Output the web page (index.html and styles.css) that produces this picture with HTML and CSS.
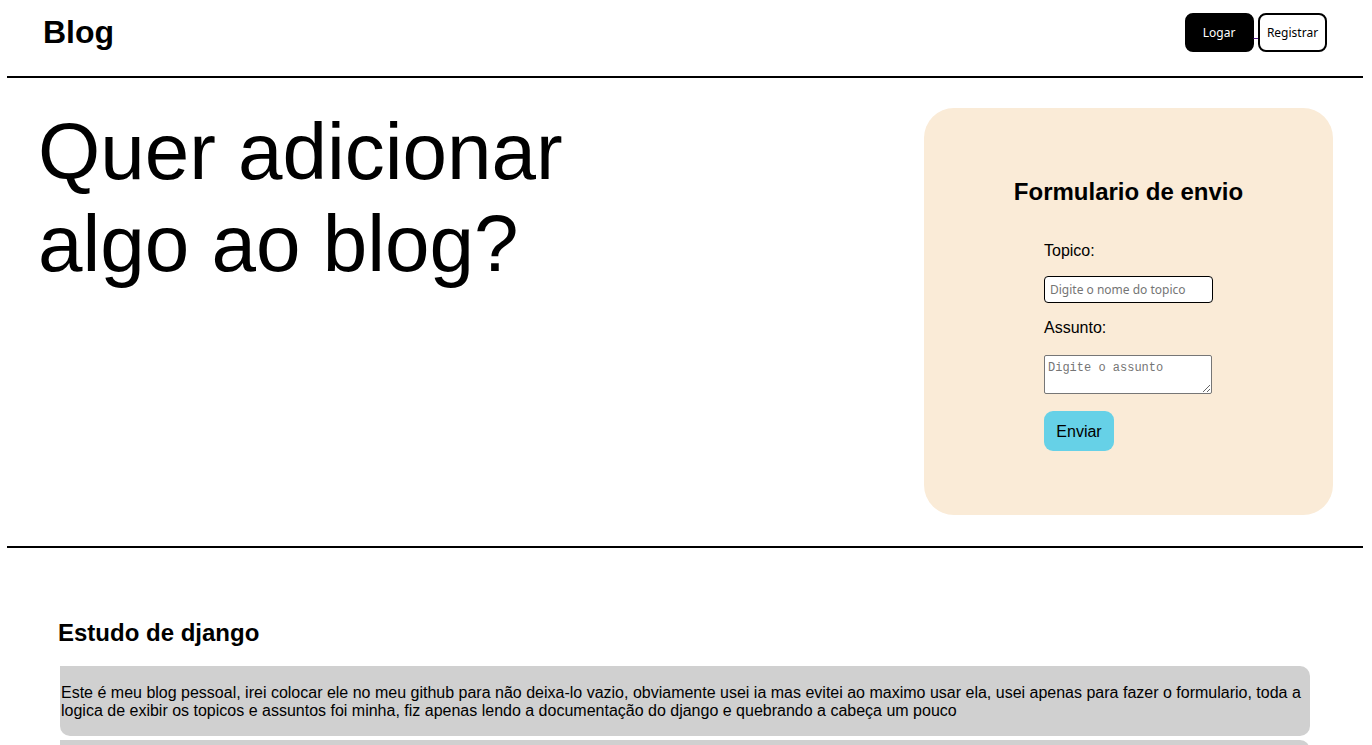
FILE: index.html
```html
<!DOCTYPE html>
<html lang="pt-BR">
<head>
<meta charset="utf-8">
<title>Blog</title>
<link rel="stylesheet" href="styles.css">
</head>
<body>
<header class="topbar">
  <h1 class="brand">Blog</h1>
  <nav class="auth"><a href="#" class="auth-link"><button class="btn btn-dark">Logar</button> </a><a href="#" class="auth-link"><button class="btn btn-light">Registrar</button></a></nav>
</header>
<div class="rule"></div>
<main class="hero">
  <h1 class="hero-title">Quer adicionar<br>algo ao blog?</h1>
  <section class="form-card">
    <h2 class="form-title">Formulario de envio</h2>
    <form class="form-fields">
      <label class="field-label" for="topico">Topico:</label>
      <input class="field-input" id="topico" type="text" placeholder="Digite o nome do topico">
      <label class="field-label" for="assunto">Assunto:</label>
      <textarea class="field-area" id="assunto" placeholder="Digite o assunto"></textarea>
      <button type="button" class="btn-send">Enviar</button>
    </form>
  </section>
</main>
<div class="rule rule-lower"></div>
<section class="posts">
  <h2 class="post-topic">Estudo de django</h2>
  <div class="post-list">
    <div class="post"><p class="post-text">Este é meu blog pessoal, irei colocar ele no meu github para não deixa-lo vazio, obviamente usei ia mas evitei ao maximo usar ela, usei apenas para fazer o formulario, toda a logica de exibir os topicos e assuntos foi minha, fiz apenas lendo a documentação do django e quebrando a cabeça um pouco</p></div>
    <div class="post post-empty"></div>
  </div>
</section>
</body>
</html>
```
FILE: styles.css
```css
* { box-sizing: border-box; }
html, body { margin: 0; padding: 0; }
body {
  font-family: "Liberation Sans", Arial, sans-serif;
  color: #000;
  background: #fff;
}
.topbar {
  display: flex;
  justify-content: space-between;
  align-items: center;
  height: 65px;
  padding: 0 45px 0 43px;
}
.brand {
  margin: 0;
  font-size: 32px;
  font-weight: bold;
}
.auth { font-size: 16px; }
.auth-link { color: #551a8b; text-decoration: underline; }
.btn {
  width: 69px;
  height: 39px;
  border-radius: 8px;
  font-family: "Noto Sans", sans-serif;
  font-size: 12px;
  padding: 0;
  vertical-align: middle;
  cursor: pointer;
}
.btn-dark { background: #000; color: #fff; border: 2px solid #000; }
.btn-light { background: #fff; color: #000; border: 2px solid #000; }
.rule {
  height: 2px;
  background: #000;
  margin: 11px 9px 0 7px;
}
.hero {
  display: flex;
  justify-content: space-between;
  align-items: flex-start;
  padding: 30px 39px 0 38px;
}
.hero-title {
  margin: -2px 0 0;
  font-size: 80px;
  font-weight: normal;
  line-height: normal;
}
.form-card {
  width: 409px;
  height: 407px;
  background: #faebd7;
  border-radius: 30px;
  padding-top: 70px;
  display: flex;
  flex-direction: column;
  align-items: center;
}
.form-title {
  margin: 0;
  font-size: 24px;
  font-weight: bold;
  line-height: 27.6px;
  text-align: center;
}
.form-fields {
  width: 169px;
  margin-top: 36px;
  display: flex;
  flex-direction: column;
  align-items: flex-start;
}
.field-label {
  font-size: 16px;
  line-height: 18px;
}
.field-input {
  width: 169px;
  height: 27px;
  margin: 16px 0 16px;
  border: 1px solid #000;
  border-radius: 4px;
  padding: 0 5px;
  font-family: "Noto Sans", sans-serif;
  font-size: 12px;
  background: #fff;
}
.field-input::placeholder { color: #757575; }
.field-area {
  width: 168px;
  height: 39px;
  margin: 18px 0 17px;
  border: 1px solid #767676;
  border-radius: 2px;
  padding: 5px 3px 2px;
  font-family: "Liberation Mono", monospace;
  font-size: 12px;
  background: #fff;
}
.field-area::placeholder { color: #757575; }
.btn-send {
  width: 70px;
  height: 40px;
  border: none;
  border-radius: 9px;
  background: #66d1e7;
  font-family: "Liberation Sans", Arial, sans-serif;
  font-size: 16px;
  color: #000;
  padding-top: 4px;
  cursor: pointer;
}
.rule-lower { margin-top: 31px; }
.posts { padding: 71px 0 0 58px; }
.post-topic {
  margin: 0;
  font-size: 24px;
  font-weight: bold;
  line-height: 27.6px;
}
.post-list {
  margin: 19px 0 0 2px;
  width: 1250px;
  display: flex;
  flex-direction: column;
  gap: 4px;
}
.post {
  background: #d0d0d0;
  border-radius: 0 10px 10px 10px;
  padding: 18px 4px 16px 1px;
}
.post-text {
  margin: 0;
  font-size: 16px;
  line-height: 18.4px;
}
.post-empty { height: 70px; }
```
